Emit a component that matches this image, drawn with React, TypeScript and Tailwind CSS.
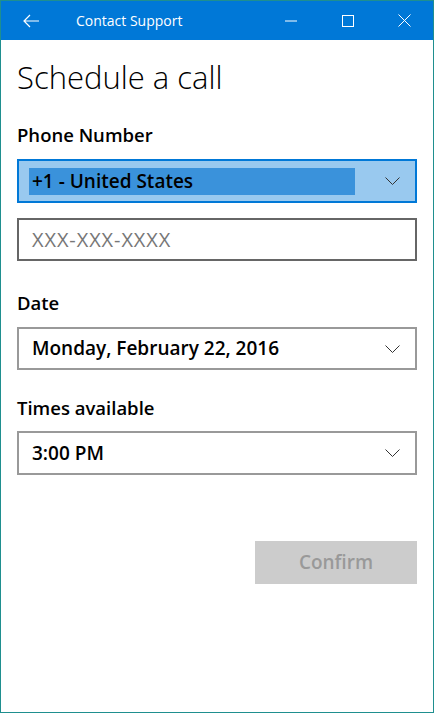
import React from 'react';

const font = { fontFamily: '"Open Sans", "Noto Sans", sans-serif' };

const Chevron = () => (
  <svg width="15" height="8" viewBox="0 0 15 8" className="shrink-0">
    <polyline points="0.5,0.5 7.5,7.5 14.5,0.5" fill="none" stroke="#333" strokeWidth="1" />
  </svg>
);

const TitleBar = () => (
  <div className="h-[39px] bg-[#0078d7] flex items-center text-white shrink-0">
    <div className="w-[60px] h-full flex items-center justify-center">
      <svg width="17" height="14" viewBox="0 0 17 14">
        <path d="M7 1 L1 7 L7 13 M1 7 H16" fill="none" stroke="#fff" strokeWidth="1.2" />
      </svg>
    </div>
    <span className="ml-[15px] text-[14px] leading-none" style={font}>Contact Support</span>
    <div className="ml-auto flex h-full">
      <div className="w-[57px] h-full flex items-center justify-center">
        <svg width="12" height="2" viewBox="0 0 12 2"><path d="M0 1 H12" stroke="#fff" strokeWidth="1" /></svg>
      </div>
      <div className="w-[57px] h-full flex items-center justify-center">
        <svg width="12" height="12" viewBox="0 0 12 12"><rect x="0.5" y="0.5" width="11" height="11" fill="none" stroke="#fff" strokeWidth="1" /></svg>
      </div>
      <div className="w-[57px] h-full flex items-center justify-center">
        <svg width="13" height="13" viewBox="0 0 13 13"><path d="M0.5 0.5 L12.5 12.5 M12.5 0.5 L0.5 12.5" stroke="#fff" strokeWidth="1" /></svg>
      </div>
    </div>
  </div>
);

const Label = ({ children, className = '' }: { children: React.ReactNode; className?: string }) => (
  <div className={`text-[18.5px] font-semibold text-black leading-[24px] ${className}`}>{children}</div>
);

export default function App() {
  return (
    <div className="w-[434px] h-[713px] border border-[#1f8f8f] bg-white flex flex-col" style={font}>
      <TitleBar />
      <div className="px-4 flex flex-col">
        <h1 className="text-[31px] font-light text-black leading-[40px] mt-[17px]">Schedule a call</h1>
        <Label className="mt-[26px]">Phone Number</Label>
        <div className="mt-[12px] h-[44px] border-2 border-[#0078d7] bg-[#99c9ef] flex items-center pl-[10px] pr-[15px]">
          <div className="h-[27px] w-[326px] bg-[#3a92db] flex items-center pl-[3px] text-[19px] font-semibold text-black">+1 - United States</div>
          <div className="ml-auto"><Chevron /></div>
        </div>
        <div className="mt-[15px] h-[43px] border-2 border-[#666] flex items-center px-[13px] text-[20px] tracking-[0.9px] text-[#777]">XXX-XXX-XXXX</div>
        <Label className="mt-[30px]">Date</Label>
        <div className="mt-[12px] h-[43px] border-2 border-[#999] flex items-center pl-[13px] pr-[15px] text-[19px] font-semibold text-black">
          <span>Monday, February 22, 2016</span>
          <div className="ml-auto"><Chevron /></div>
        </div>
        <Label className="mt-[26px]">Times available</Label>
        <div className="mt-[11px] h-[44px] border-2 border-[#999] flex items-center pl-[13px] pr-[15px] text-[19px] font-semibold text-black">
          <span>3:00 PM</span>
          <div className="ml-auto"><Chevron /></div>
        </div>
        <div className="mt-[66px] flex justify-end">
          <button className="w-[162px] h-[43px] bg-[#cccccc] text-[#999] text-[19px] font-semibold">Confirm</button>
        </div>
      </div>
    </div>
  );
}
